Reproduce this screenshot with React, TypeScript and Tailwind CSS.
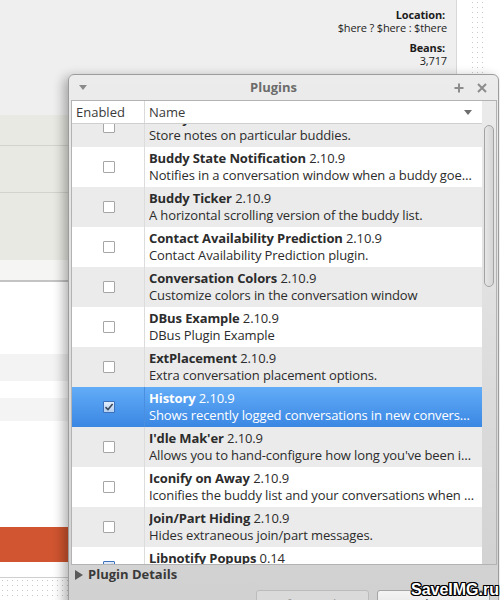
import React from 'react';

interface Plugin {
  name: string;
  version: string;
  summary: string;
  enabled: boolean;
}

const plugins: Plugin[] = [
  { name: 'Buddy Notes', version: '2.10.9', summary: 'Store notes on particular buddies.', enabled: false },
  { name: 'Buddy State Notification', version: '2.10.9', summary: 'Notifies in a conversation window when a buddy goes or returns from away or idle.', enabled: false },
  { name: 'Buddy Ticker', version: '2.10.9', summary: 'A horizontal scrolling version of the buddy list.', enabled: false },
  { name: 'Contact Availability Prediction', version: '2.10.9', summary: 'Contact Availability Prediction plugin.', enabled: false },
  { name: 'Conversation Colors', version: '2.10.9', summary: 'Customize colors in the conversation window', enabled: false },
  { name: 'DBus Example', version: '2.10.9', summary: 'DBus Plugin Example', enabled: false },
  { name: 'ExtPlacement', version: '2.10.9', summary: 'Extra conversation placement options.', enabled: false },
  { name: 'History', version: '2.10.9', summary: 'Shows recently logged conversations in new conversations.', enabled: true },
  { name: "I'dle Mak'er", version: '2.10.9', summary: "Allows you to hand-configure how long you've been idle", enabled: false },
  { name: 'Iconify on Away', version: '2.10.9', summary: 'Iconifies the buddy list and your conversations when you go away.', enabled: false },
  { name: 'Join/Part Hiding', version: '2.10.9', summary: 'Hides extraneous join/part messages.', enabled: false },
  { name: 'Libnotify Popups', version: '0.14', summary: 'Displays popups via libnotify.', enabled: true },
];

const SELECTED = 7;

const Checkbox: React.FC<{ checked: boolean }> = ({ checked }) =>
  checked ? (
    <div className="w-[12px] h-[12px] rounded-[1px] border border-[#3c70bb] bg-linear-to-b from-[#e4eefb] to-[#b4cff2] flex items-center justify-center">
      <svg width="10" height="10" viewBox="0 0 10 10">
        <path d="M1.5 5.2 L4 7.6 L8.6 2" fill="none" stroke="#3d4a5c" strokeWidth="1.6" />
      </svg>
    </div>
  ) : (
    <div className="w-[12px] h-[12px] rounded-[1px] border border-[#a6a6a6] bg-white" />
  );

const App: React.FC = () => {
  return (
    <div className="relative w-[500px] h-[600px] overflow-hidden bg-white font-['Open_Sans',sans-serif] text-[#1c1c1c]">
      {/* main window behind the dialog */}
      <div className="flex h-full">
        <div className="flex flex-col w-[456px] h-full">
          <div className="h-[115px] bg-[#efefef] flex flex-col items-end pr-[9px] pt-[8px] text-[11px] leading-[13px] tracking-[-0.15px]">
            <div className="font-bold pr-[2px]">Location:</div>
            <div>$here ? $here : $there</div>
            <div className="font-bold pr-[2px] mt-[7px]">Beans:</div>
            <div>3,717</div>
          </div>
          <div className="h-[31px] bg-[#e9e9e3] border-b border-[#d3d3cd]" />
          <div className="h-[47px] bg-[#e9e9e3] border-b border-[#d3d3cd]" />
          <div className="h-[67px] bg-[#e9e9e3]" />
          <div className="h-[22px] bg-[#f5f5f3] border-b-2 border-[#c4c4c4]" />
          <div className="h-[72px] bg-white" />
          <div className="h-[27px] bg-[#f3f3f3]" />
          <div className="h-[17px] bg-white" />
          <div className="h-[23px] bg-[#f4f4f4]" />
          <div className="h-[106px] bg-white" />
          <div className="h-[35px] bg-[#d05530]" />
          <div className="h-[16px] bg-white border-b border-[#cfcfcf]" />
          <div className="flex-1 bg-white bg-[radial-gradient(circle,#c9c9c9_0.8px,transparent_1px)] bg-[length:5px_5px]" />
        </div>
        <div className="flex-1 border-l border-[#d8d8d8] bg-white pl-[13px]">
          <div className="w-[13px] h-[80px] bg-[radial-gradient(circle,#c9c9c9_0.8px,transparent_1px)] bg-[length:5px_5px]" />
        </div>
      </div>

      {/* Plugins dialog */}
      <div className="absolute left-[68px] top-[74px] w-[431px] h-[560px] rounded-t-[6px] border border-[#9c9c9c] bg-linear-to-b from-[#ececec] to-[#cfcfcf] shadow-[-4px_3px_12px_rgba(0,0,0,0.32)] flex flex-col">
        <div className="h-[25px] flex items-center">
          <div className="w-[25px] flex justify-center pl-[2px]">
            <svg width="8" height="5" viewBox="0 0 8 5">
              <path d="M0 0 H8 L4 5 Z" fill="#8a8a8a" />
            </svg>
          </div>
          <div className="flex-1 text-center font-bold text-[13px] text-[#6c6c6c]">Plugins</div>
          <div className="w-[45px] flex items-center gap-[13px] pl-[1px]">
            <svg width="10" height="10" viewBox="0 0 10 10">
              <path d="M5 0.5 V9.5 M0.5 5 H9.5" stroke="#8c8c8c" strokeWidth="2" />
            </svg>
            <svg width="10" height="10" viewBox="0 0 10 10">
              <path d="M1 1 L9 9 M9 1 L1 9" stroke="#8c8c8c" strokeWidth="2" />
            </svg>
          </div>
        </div>

        <div className="ml-[2px] mr-[1px] h-[465px] border border-[#b3b3b3] flex">
          <div className="w-[410px] flex flex-col">
            <div className="h-[23px] bg-white border-b border-[#cfcfcf] flex text-[13px] text-[#3a3a3a]">
              <div className="w-[73px] border-r border-[#dadada] pl-[4px] leading-[22px]">Enabled</div>
              <div className="flex-1 flex items-center justify-between pl-[4px] pr-[10px]">
                <span className="leading-[22px]">Name</span>
                <svg width="8" height="5" viewBox="0 0 8 5">
                  <path d="M0 0 H8 L4 5 Z" fill="#6e6e6e" />
                </svg>
              </div>
            </div>
            <div className="flex-1 overflow-hidden">
              <div className="-mt-[17px] flex flex-col">
                {plugins.map((p, i) => {
                  const selected = i === SELECTED;
                  const rowBg = selected
                    ? 'bg-linear-to-b from-[#62acf7] to-[#3a87e3] text-white'
                    : i % 2 === 0
                    ? 'bg-[#ebebeb] text-[#2c2c2c]'
                    : 'bg-white text-[#2c2c2c]';
                  return (
                    <div key={p.name} className={`h-[40px] flex shrink-0 ${rowBg}`}>
                      <div className={`w-[73px] border-r flex items-center pl-[31px] ${selected ? 'border-[#4a8fdf]' : 'border-[#dcdcdc]'}`}>
                        <Checkbox checked={p.enabled} />
                      </div>
                      <div className="flex-1 min-w-0 pl-[4px] pr-[6px] pt-[3px] text-[13px] leading-[17px] tracking-[-0.12px]">
                        <div className="truncate">
                          <span className="font-bold">{p.name}</span> {p.version}
                        </div>
                        <div className="truncate">{p.summary}</div>
                      </div>
                    </div>
                  );
                })}
              </div>
            </div>
          </div>
          <div className="flex-1 pl-[2px] pr-[1px] pt-[24px]">
            <div className="h-[162px] w-[10px] rounded-full border border-[#a3a3a3] bg-linear-to-r from-[#e6e6e6] to-[#d4d4d4]" />
          </div>
        </div>

        <div className="h-[20px] flex items-center pl-[6px] gap-[5px]">
          <svg width="8" height="10" viewBox="0 0 8 10">
            <path d="M0 0 L8 5 L0 10 Z" fill="#5a5a5a" />
          </svg>
          <span className="font-bold text-[13px] text-[#3a3a3a]">Plugin Details</span>
        </div>

        <div className="mt-[5px] flex justify-end gap-[8px] pr-[8px]">
          <div className="w-[113px] h-[30px] rounded-[3px] border border-[#bcbcbc] bg-[#dadada] text-[#9a9a9a] text-[13px] flex items-center justify-center">
            Configure Plugin
          </div>
          <div className="w-[113px] h-[30px] rounded-[3px] border border-[#a5a5a5] bg-linear-to-b from-[#f4f4f4] to-[#dedede] text-[#2c2c2c] text-[13px] flex items-center justify-center">
            Close
          </div>
        </div>
      </div>

      {/* watermark */}
      <div className="absolute right-[1px] bottom-[-2px] font-['Liberation_Sans',sans-serif] font-bold text-[16px] text-white [text-shadow:1px_1px_0_#000,-1px_-1px_0_#000,1px_-1px_0_#000,-1px_1px_0_#000,0_1px_0_#000,0_-1px_0_#000,1px_0_0_#000,-1px_0_0_#000]">
        SaveIMG.ru
      </div>
    </div>
  );
};

export default App;
